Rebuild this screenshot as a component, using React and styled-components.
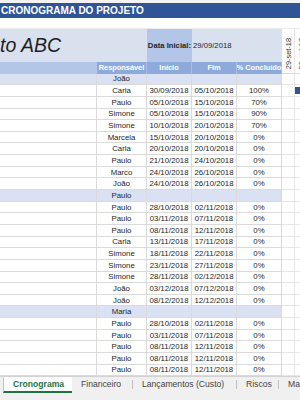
import styled, { createGlobalStyle } from "styled-components";

const Global = createGlobalStyle`
  html, body { margin: 0; padding: 0; }
  body {
    width: 300px;
    height: 400px;
    overflow: hidden;
    background: #ffffff;
    font-family: "Liberation Sans", Arial, sans-serif;
  }
`;

const COLS = "97px 50px 45px 45px 45px 13px 13px";
const ROW_H = 11.65;
const LINE = "#dadada";

const Sheet = styled.div`
  width: 300px;
  height: 400px;
  display: flex;
  flex-direction: column;
  overflow: hidden;
`;

const TopEdge = styled.div`
  height: 3px;
  flex: none;
  background: #f3f3f3;
`;

const Banner = styled.div`
  height: 15px;
  flex: none;
  background: #2f5597;
  color: #ffffff;
  font-weight: bold;
  font-size: 10px;
  line-height: 15px;
  padding-left: 1px;
  white-space: nowrap;
`;

const BlankRow = styled.div`
  height: 11px;
  flex: none;
  box-sizing: border-box;
  border-bottom: 1px solid #ececec;
`;

const HeadGrid = styled.div`
  flex: none;
  display: grid;
  grid-template-columns: ${COLS};
  grid-template-rows: 33px ${ROW_H}px;
  width: 308px;
  height: ${33 + ROW_H}px;
`;

const TitleCell = styled.div`
  grid-column: 1 / 3;
  grid-row: 1;
  background: #dae1ee;
  display: flex;
  align-items: center;
  font-style: italic;
  font-size: 19.5px;
  color: #1f1f1f;
  white-space: nowrap;
  overflow: hidden;
`;

const LabelCell = styled.div`
  grid-column: ${(p) => p.$col};
  grid-row: 1;
  background: ${(p) => p.$bg};
  display: flex;
  align-items: center;
  justify-content: ${(p) => (p.$right ? "flex-end" : "flex-start")};
  padding: 0 1px;
  font-size: 7.7px;
  font-weight: ${(p) => (p.$bold ? "bold" : "normal")};
  color: #262626;
  white-space: nowrap;
`;

const DateHead = styled.div`
  grid-column: ${(p) => p.$col};
  grid-row: 1 / 3;
  background: #ffffff;
  box-sizing: border-box;
  border-right: 1px solid #e6e6e6;
  border-bottom: 1px solid ${LINE};
  display: flex;
  align-items: center;
  justify-content: center;
  overflow: hidden;
  padding-top: 6px;
`;

const Vertical = styled.span`
  writing-mode: vertical-rl;
  transform: rotate(180deg);
  font-size: 7.4px;
  color: #333333;
  white-space: nowrap;
`;

const HeadCell = styled.div`
  grid-column: ${(p) => p.$col};
  grid-row: 2;
  background: ${(p) => (p.$light ? "#b4c6e7" : "#8eaadb")};
  box-sizing: border-box;
  border-right: 1px solid ${(p) => (p.$light ? "#b4c6e7" : "#a9bde3")};
  color: #ffffff;
  font-weight: bold;
  font-size: 7.4px;
  display: flex;
  align-items: center;
  justify-content: center;
  white-space: nowrap;
`;

const Row = styled.div`
  flex: none;
  display: grid;
  grid-template-columns: ${COLS};
  height: ${ROW_H}px;
  width: 308px;
`;

const Cell = styled.div`
  box-sizing: border-box;
  border-bottom: 1px solid ${LINE};
  border-right: 1px solid ${LINE};
  background: ${(p) => (p.$group ? "#d9e1f2" : "#ffffff")};
  font-size: 7.8px;
  color: #262626;
  display: flex;
  align-items: center;
  justify-content: center;
  white-space: nowrap;
  overflow: hidden;
`;

const GanttCell = styled.div`
  box-sizing: border-box;
  border-bottom: 1px solid #e6e6e6;
  border-right: 1px solid #e6e6e6;
  display: flex;
  align-items: center;
`;

const Bar = styled.div`
  height: 7px;
  width: 100%;
  background: #2f5597;
`;

const TabBar = styled.div`
  flex: 1;
  background: #f0f0f0;
  border-top: 1px solid #d2d2d2;
  display: flex;
  align-items: flex-start;
  padding-left: 3px;
  overflow: hidden;
`;

const Tab = styled.div`
  position: relative;
  flex: none;
  width: ${(p) => p.$w}px;
  height: 16px;
  box-sizing: border-box;
  padding-left: 9px;
  display: flex;
  align-items: center;
  font-size: 8.6px;
  white-space: nowrap;
  color: ${(p) => (p.$active ? "#217346" : "#444444")};
  font-weight: ${(p) => (p.$active ? "bold" : "normal")};
  background: ${(p) => (p.$active ? "#ffffff" : "transparent")};
  border-bottom: 2px solid ${(p) => (p.$active ? "#217346" : "transparent")};
  border-left: ${(p) => (p.$active ? "1px solid #c6c6c6" : "none")};

  &::after {
    content: "";
    position: absolute;
    right: 0;
    top: 3px;
    bottom: 2px;
    width: 1px;
    background: ${(p) => (p.$active ? "transparent" : "#c2c2c2")};
  }
`;

const tasks = [
  { group: "João" },
  { who: "Carla", start: "30/09/2018", end: "05/10/2018", pct: "100%", bar: true },
  { who: "Paulo", start: "05/10/2018", end: "15/10/2018", pct: "70%" },
  { who: "Simone", start: "05/10/2018", end: "15/10/2018", pct: "90%" },
  { who: "Simone", start: "10/10/2018", end: "20/10/2018", pct: "70%" },
  { who: "Marcela", start: "15/10/2018", end: "20/10/2018", pct: "0%" },
  { who: "Carla", start: "20/10/2018", end: "20/10/2018", pct: "0%" },
  { who: "Paulo", start: "21/10/2018", end: "24/10/2018", pct: "0%" },
  { who: "Marco", start: "24/10/2018", end: "26/10/2018", pct: "0%" },
  { who: "João", start: "24/10/2018", end: "26/10/2018", pct: "0%" },
  { group: "Paulo" },
  { who: "Paulo", start: "28/10/2018", end: "02/11/2018", pct: "0%" },
  { who: "Paulo", start: "03/11/2018", end: "07/11/2018", pct: "0%" },
  { who: "Paulo", start: "08/11/2018", end: "12/11/2018", pct: "0%" },
  { who: "Carla", start: "13/11/2018", end: "17/11/2018", pct: "0%" },
  { who: "Simone", start: "18/11/2018", end: "22/11/2018", pct: "0%" },
  { who: "Simone", start: "23/11/2018", end: "27/11/2018", pct: "0%" },
  { who: "Simone", start: "28/11/2018", end: "02/12/2018", pct: "0%" },
  { who: "João", start: "03/12/2018", end: "07/12/2018", pct: "0%" },
  { who: "João", start: "08/12/2018", end: "12/12/2018", pct: "0%" },
  { group: "Maria" },
  { who: "Paulo", start: "28/10/2018", end: "02/11/2018", pct: "0%" },
  { who: "Paulo", start: "03/11/2018", end: "07/11/2018", pct: "0%" },
  { who: "Paulo", start: "08/11/2018", end: "12/11/2018", pct: "0%" },
  { who: "Paulo", start: "08/11/2018", end: "12/11/2018", pct: "0%" },
  { who: "Paulo", start: "08/11/2018", end: "12/11/2018", pct: "0%" },
];

const tabs = [
  { name: "Cronograma", w: 69, active: true },
  { name: "Financeiro", w: 61 },
  { name: "Lançamentos (Custo)", w: 104 },
  { name: "Riscos", w: 42 },
  { name: "Marcos", w: 60 },
];

export default function App() {
  return (
    <>
      <Global />
      <Sheet>
        <TopEdge />
        <Banner>CRONOGRAMA DO PROJETO</Banner>
        <BlankRow />
        <HeadGrid>
          <TitleCell>to ABC</TitleCell>
          <LabelCell $col={3} $bg="#b4c6e7" $bold $right>Data Inicial:</LabelCell>
          <LabelCell $col={4} $bg="#dae1ee">29/09/2018</LabelCell>
          <LabelCell $col={5} $bg="#dae1ee" />
          <DateHead $col={6}><Vertical>29-set-18</Vertical></DateHead>
          <DateHead $col={7}><Vertical>06-out-18</Vertical></DateHead>
          <HeadCell $col={1} $light />
          <HeadCell $col={2}>Responsável</HeadCell>
          <HeadCell $col={3}>Início</HeadCell>
          <HeadCell $col={4}>Fim</HeadCell>
          <HeadCell $col={5}>% Concluído</HeadCell>
        </HeadGrid>
        {tasks.map((t, i) =>
          t.group ? (
            <Row key={i}>
              <Cell $group />
              <Cell $group>{t.group}</Cell>
              <Cell $group />
              <Cell $group />
              <Cell $group />
              <GanttCell />
              <GanttCell />
            </Row>
          ) : (
            <Row key={i}>
              <Cell />
              <Cell>{t.who}</Cell>
              <Cell>{t.start}</Cell>
              <Cell>{t.end}</Cell>
              <Cell>{t.pct}</Cell>
              <GanttCell />
              <GanttCell>{t.bar && <Bar />}</GanttCell>
            </Row>
          )
        )}
        <TabBar>
          {tabs.map((t) => (
            <Tab key={t.name} $w={t.w} $active={t.active}>{t.name}</Tab>
          ))}
        </TabBar>
      </Sheet>
    </>
  );
}
